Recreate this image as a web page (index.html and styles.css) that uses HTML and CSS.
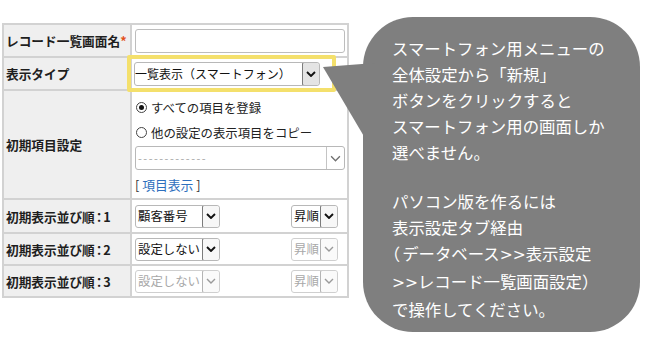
FILE: index.html
```html
<!DOCTYPE html>
<html lang="ja">
<head>
<meta charset="utf-8">
<link rel="stylesheet" href="styles.css">
</head>
<body>
<div class="page">
  <div class="form">
    <div class="lbl">レコード一覧画面名<span class="req">*</span></div>
    <div class="val"><div class="input"></div></div>

    <div class="lbl">表示タイプ</div>
    <div class="val">
      <div class="sel sel-type">
        <span class="txt">一覧表示（スマートフォン）</span>
        <span class="arr arr-box arr-gray"><svg viewBox="0 0 10 6"><polyline points="1,1 5,5 9,1"/></svg></span>
      </div>
    </div>

    <div class="lbl">初期項目設定</div>
    <div class="val val-stack">
      <div class="radio"><span class="dot on"></span>すべての項目を登録</div>
      <div class="radio"><span class="dot"></span>他の設定の表示項目をコピー</div>
      <div class="sel sel-wide">
        <span class="txt dash">-------------</span>
        <span class="arr arr-plain"><svg viewBox="0 0 10 6"><polyline points="1,1 5,5 9,1"/></svg></span>
      </div>
      <div class="link">[ <a class="lnk">項目表示</a> ]</div>
    </div>

    <div class="lbl">初期表示並び順<span class="colon">：</span>1</div>
    <div class="val val-sort">
      <div class="sel sel-field"><span class="txt">顧客番号</span><span class="arr arr-box"><svg viewBox="0 0 10 6"><polyline points="1,1 5,5 9,1"/></svg></span></div>
      <div class="sel sel-order"><span class="txt">昇順</span><span class="arr arr-box"><svg viewBox="0 0 10 6"><polyline points="1,1 5,5 9,1"/></svg></span></div>
    </div>

    <div class="lbl">初期表示並び順<span class="colon">：</span>2</div>
    <div class="val val-sort">
      <div class="sel sel-field"><span class="txt">設定しない</span><span class="arr arr-box"><svg viewBox="0 0 10 6"><polyline points="1,1 5,5 9,1"/></svg></span></div>
      <div class="sel sel-order off"><span class="txt">昇順</span><span class="arr arr-box"><svg viewBox="0 0 10 6"><polyline points="1,1 5,5 9,1"/></svg></span></div>
    </div>

    <div class="lbl">初期表示並び順<span class="colon">：</span>3</div>
    <div class="val val-sort">
      <div class="sel sel-field off"><span class="txt">設定しない</span><span class="arr arr-box"><svg viewBox="0 0 10 6"><polyline points="1,1 5,5 9,1"/></svg></span></div>
      <div class="sel sel-order off"><span class="txt">昇順</span><span class="arr arr-box"><svg viewBox="0 0 10 6"><polyline points="1,1 5,5 9,1"/></svg></span></div>
    </div>

    <div class="hl"></div>
  </div>

  <div class="bubble">
    <svg class="tail" viewBox="0 0 52 100" width="52" height="100"><polygon points="0,6 52,2 52,94"/></svg>
    <p>スマートフォン用メニューの<br>全体設定から「新規」<br>ボタンをクリックすると<br>スマートフォン用の画面しか<br>選べません。</p>
    <p class="p2">パソコン版を作るには<br>表示設定タブ経由<br><span class="half">（</span>データベース<span class="gt">&gt;&gt;</span>表示設定<br><span class="gt">&gt;&gt;</span>レコード一覧画面設定）<br>で操作してください。</p>
  </div>
</div>
</body>
</html>
```

FILE: styles.css
```css
* { box-sizing: border-box; }
html, body {
  margin: 0;
  padding: 0;
  background: #ffffff;
}
body {
  width: 649px;
  height: 339px;
  overflow: hidden;
  font-family: "Noto Sans CJK JP", "Noto Sans", sans-serif;
}
.page {
  display: flex;
  align-items: flex-start;
}

/* form table */
.form {
  position: relative;
  margin: 23px 0 0 2px;
  display: grid;
  grid-template-columns: 126px 215px;
  grid-template-rows: 31px 31px 107px 32px 30px 30px;
  gap: 2px;
  padding: 2px;
  background: #d2d2d2;
  font-size: 12.4px;
  color: #222;
}
.lbl {
  background: #efefef;
  display: flex;
  align-items: center;
  padding-left: 2px;
  font-weight: bold;
  font-size: 12.7px;
  color: #1e1e1e;
  white-space: nowrap;
}
.colon {
  font-feature-settings: "halt";
  margin: 0 1px;
}
.req { color: #e2531c; }
.val {
  background: #ffffff;
  display: flex;
  align-items: center;
  padding-left: 3px;
  padding-right: 2px;
}
.input {
  width: 210px;
  height: 24px;
  border: 1px solid #bdbdbd;
  border-radius: 3px;
  background: #fff;
}

/* selects */
.sel {
  display: flex;
  align-items: stretch;
  height: 24px;
  border: 1px solid #b8b8b8;
  border-radius: 3px;
  background: #fff;
  white-space: nowrap;
  overflow: hidden;
}
.sel .txt {
  flex: 1;
  display: flex;
  align-items: center;
  padding-left: 1px;
  color: #111;
  overflow: hidden;
}
.arr {
  display: flex;
  align-items: center;
  justify-content: center;
  width: 18px;
  flex: none;
}
.arr svg {
  width: 10px;
  height: 6px;
  fill: none;
  stroke: #111;
  stroke-width: 1.9;
}
.arr-box {
  border: 1px solid #7c7c7c;
  border-radius: 2px;
  background: #f7f7f7;
  margin: -1px -1px -1px 0;
}
.arr-gray { background: #e4e4e4; }
.arr-plain {
  border-left: 1px solid #c4c4c4;
}
.arr-plain svg {
  stroke: #707070;
  stroke-width: 1.2;
  width: 11px;
  height: 7px;
}
.sel-type {
  width: 186px;
  margin-left: -1px;
  font-size: 12px;
}
.sel-type .txt { padding-left: 0; }
.sel-wide { width: 210px; }
.sel .dash {
  color: #a6a6a6;
  font-size: 11px;
  letter-spacing: 1.5px;
  padding-left: 2px;
}

.val-sort { justify-content: space-between; padding-right: 9px; }
.sel-field { width: 85px; height: 23px; }
.sel-order { width: 47px; height: 23px; }
.sel-field .txt, .sel-order .txt { padding-left: 2px; }
.off { border-color: #cfcfcf; }
.off .txt { color: #a8a8a8; }
.off .arr-box { border-color: #b4b4b4; background: #fafafa; }
.off .arr svg { stroke: #9a9a9a; stroke-width: 1.4; }

/* stacked cell */
.val-stack {
  flex-direction: column;
  align-items: flex-start;
  justify-content: flex-start;
  padding-top: 4px;
}
.radio {
  height: 25px;
  display: flex;
  align-items: center;
  gap: 4px;
  padding-left: 1px;
  white-space: nowrap;
}
.dot {
  width: 11px;
  height: 11px;
  border: 1px solid #444;
  border-radius: 50%;
  display: flex;
  align-items: center;
  justify-content: center;
  background: #fff;
}
.dot.on::after {
  content: "";
  width: 5px;
  height: 5px;
  border-radius: 50%;
  background: #111;
}
.val-stack .sel-wide { margin-top: 1px; }
.link {
  height: 24px;
  margin-top: 2px;
  display: flex;
  align-items: center;
  white-space: pre;
  color: #333;
  font-size: 12.8px;
}
.lnk { color: #2e6fbd; }

/* yellow highlight */
.hl {
  position: absolute;
  left: 125px;
  top: 32px;
  width: 209px;
  height: 37px;
  border: 4px solid #f4e06c;
  border-radius: 2px;
  pointer-events: none;
}

/* callout */
.bubble {
  position: relative;
  margin: 17px 0 0 14px;
  width: 277px;
  height: 315px;
  background: #7f7f7f;
  border-radius: 50px;
  padding: 18px 0 0 29px;
  color: #ffffff;
  font-size: 16.4px;
  line-height: 26px;
}
.tail {
  position: absolute;
  left: -40px;
  top: 44px;
  fill: #7f7f7f;
}
.bubble p {
  position: relative;
  margin: 0;
  white-space: nowrap;
}
.bubble .p2 { margin-top: 23px; }
.half {
  font-feature-settings: "halt";
  margin-right: 2px;
}
.gt {
  font-family: "DejaVu Sans", sans-serif;
  font-size: 15.5px;
}
```
